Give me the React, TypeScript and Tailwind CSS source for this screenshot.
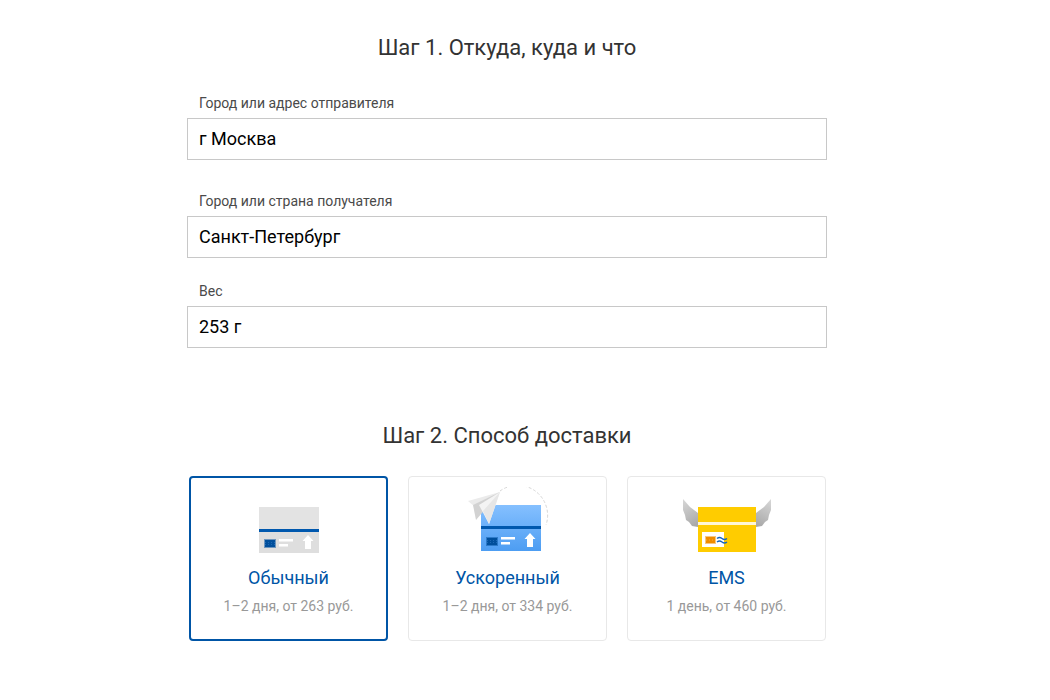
import React from "react";

const Field = ({ label, value, className }: { label: string; value: string; className: string }) => (
  <div className={className}>
    <div className="h-[20px] pl-[12px] text-[14px] leading-[20px] text-[#4a4a4a]">{label}</div>
    <div className="mt-[5px] flex h-[42px] items-center border border-[#c8c8c8] pb-[2px] pl-[11px] text-[18px] text-black">{value}</div>
  </div>
);

const Stamp = ({ x, y, w, h, fill, hatch }: { x: number; y: number; w: number; h: number; fill: string; hatch: string }) => (
  <g>
    <rect x={x} y={y} width={w} height={h} fill={fill} />
    <rect x={x - 0.5} y={y - 0.5} width={w + 1} height={h + 1} fill="none" stroke={fill} strokeWidth="1" strokeDasharray="1 1" />
    <path d={`M${x} ${y + 2.5} H${x + w} M${x} ${y + h - 2.5} H${x + w}`} stroke={hatch} strokeWidth="1" strokeDasharray="1 2" />
  </g>
);

const Arrow = ({ x, y }: { x: number; y: number }) => (
  <polygon fill="#fff" points={`${x},${y} ${x + 5.5},${y + 6} ${x + 3},${y + 6} ${x + 3},${y + 14} ${x - 3},${y + 14} ${x - 3},${y + 6} ${x - 5.5},${y + 6}`} />
);

const IconOrdinary = () => (
  <svg width="110" height="70" viewBox="234 487 110 70">
    <rect x="259" y="507" width="60" height="22" fill="#e3e3e3" />
    <rect x="259" y="532" width="60" height="21" fill="#dedede" />
    <rect x="259" y="529" width="60" height="3" fill="#0058ae" />
    <Stamp x={265} y={540} w={10} h={7} fill="#004f9c" hatch="#1c68b4" />
    <rect x="279" y="539" width="14" height="2.5" fill="#fff" />
    <rect x="279" y="544" width="9" height="2.5" fill="#fff" />
    <Arrow x={308} y={535} />
  </svg>
);

const IconFast = () => (
  <svg width="110" height="70" viewBox="453 487 110 70">
    <defs>
      <linearGradient id="fastGrad" x1="0" y1="0" x2="0" y2="1">
        <stop offset="0" stopColor="#85c0ff" />
        <stop offset="1" stopColor="#4d9df2" />
      </linearGradient>
    </defs>
    <path d="M500 491 A 30 30 0 0 1 546 525" fill="none" stroke="#d6d6d6" strokeWidth="1" strokeDasharray="3 2" />
    <rect x="481" y="505" width="60" height="46" fill="url(#fastGrad)" />
    <rect x="481" y="526" width="60" height="3" fill="#0058ae" />
    <Stamp x={487} y={538} w={10} h={7} fill="#004f9c" hatch="#1c68b4" />
    <rect x="501" y="537" width="14" height="2.5" fill="#fff" />
    <rect x="501" y="542" width="9" height="2.5" fill="#fff" />
    <Arrow x={530} y={533} />
    <polygon points="468,501 500,492 475,507" fill="#ebebeb" />
    <polygon points="473,505 500,492 476,520" fill="#d2d2d2" />
    <polygon points="479,505 500,492 489,524" fill="#f4f4f4" />
    <polygon points="483,511 500,492 489,524" fill="#e6e6e6" />
  </svg>
);

const Wing = () => (
  <polygon
    points="683,499 690,507 698,513 698,527 692,526 689,522 686,520 685,515 683,510"
    fill="url(#wingGrad)"
  />
);

const IconEms = () => (
  <svg width="110" height="70" viewBox="672 487 110 70">
    <defs>
      <linearGradient id="wingGrad" gradientUnits="userSpaceOnUse" x1="683" y1="499" x2="698" y2="525">
        <stop offset="0" stopColor="#d8d8d8" />
        <stop offset="1" stopColor="#a8a8a8" />
      </linearGradient>
    </defs>
    <Wing />
    <g transform="translate(1454 0) scale(-1 1)">
      <Wing />
    </g>
    <rect x="698" y="507" width="58" height="45" fill="#ffcc00" />
    <rect x="698" y="522" width="58" height="3" fill="#fff6d5" />
    <rect x="702" y="532" width="22" height="15" fill="#fff" />
    <Stamp x={706} y={537} w={9} h={6} fill="#f08c00" hatch="#f29c20" />
    <path d="M717 538.5 q2.5 -2 5 0 t5 0 M717 542 q2.5 -2 5 0 t5 0" fill="none" stroke="#1565c0" strokeWidth="1.4" />
  </svg>
);

const Card = ({ icon, title, sub, className }: { icon: React.ReactNode; title: string; sub: string; className: string }) => (
  <div className={className}>
    <div className="mt-[9px] flex justify-center">{icon}</div>
    <div className="mt-[10px] text-center text-[18px] leading-[22px] text-[#0055a6]">{title}</div>
    <div className="mt-[8px] text-center text-[14px] leading-[18px] text-[#999999]">{sub}</div>
  </div>
);

export default function App() {
  return (
    <div className="h-[700px] overflow-hidden bg-white font-['Roboto',sans-serif]">
      <div className="ml-[187px] w-[640px] pt-[34px]">
        <h1 className="text-center text-[22px] leading-[28px] text-[#333333]">Шаг 1. Откуда, куда и что</h1>
        <Field className="mt-[31px]" label="Город или адрес отправителя" value="г Москва" />
        <Field className="mt-[31px]" label="Город или страна получателя" value="Санкт-Петербург" />
        <Field className="mt-[23px]" label="Вес" value="253 г" />
        <h2 className="mt-[74px] text-center text-[22px] leading-[28px] text-[#333333]">Шаг 2. Способ доставки</h2>
        <div className="mt-[26px] flex gap-[20px] pl-[2px]">
          <Card className="h-[165px] w-[199px] rounded-[4px] border-2 border-[#0055a6]" icon={<IconOrdinary />} title="Обычный" sub="1–2 дня, от 263 руб." />
          <Card className="h-[165px] w-[199px] rounded-[4px] border border-[#e8e8e8] pt-[1px]" icon={<IconFast />} title="Ускоренный" sub="1–2 дня, от 334 руб." />
          <Card className="h-[165px] w-[199px] rounded-[4px] border border-[#e8e8e8] pt-[1px]" icon={<IconEms />} title="EMS" sub="1 день, от 460 руб." />
        </div>
      </div>
    </div>
  );
}
